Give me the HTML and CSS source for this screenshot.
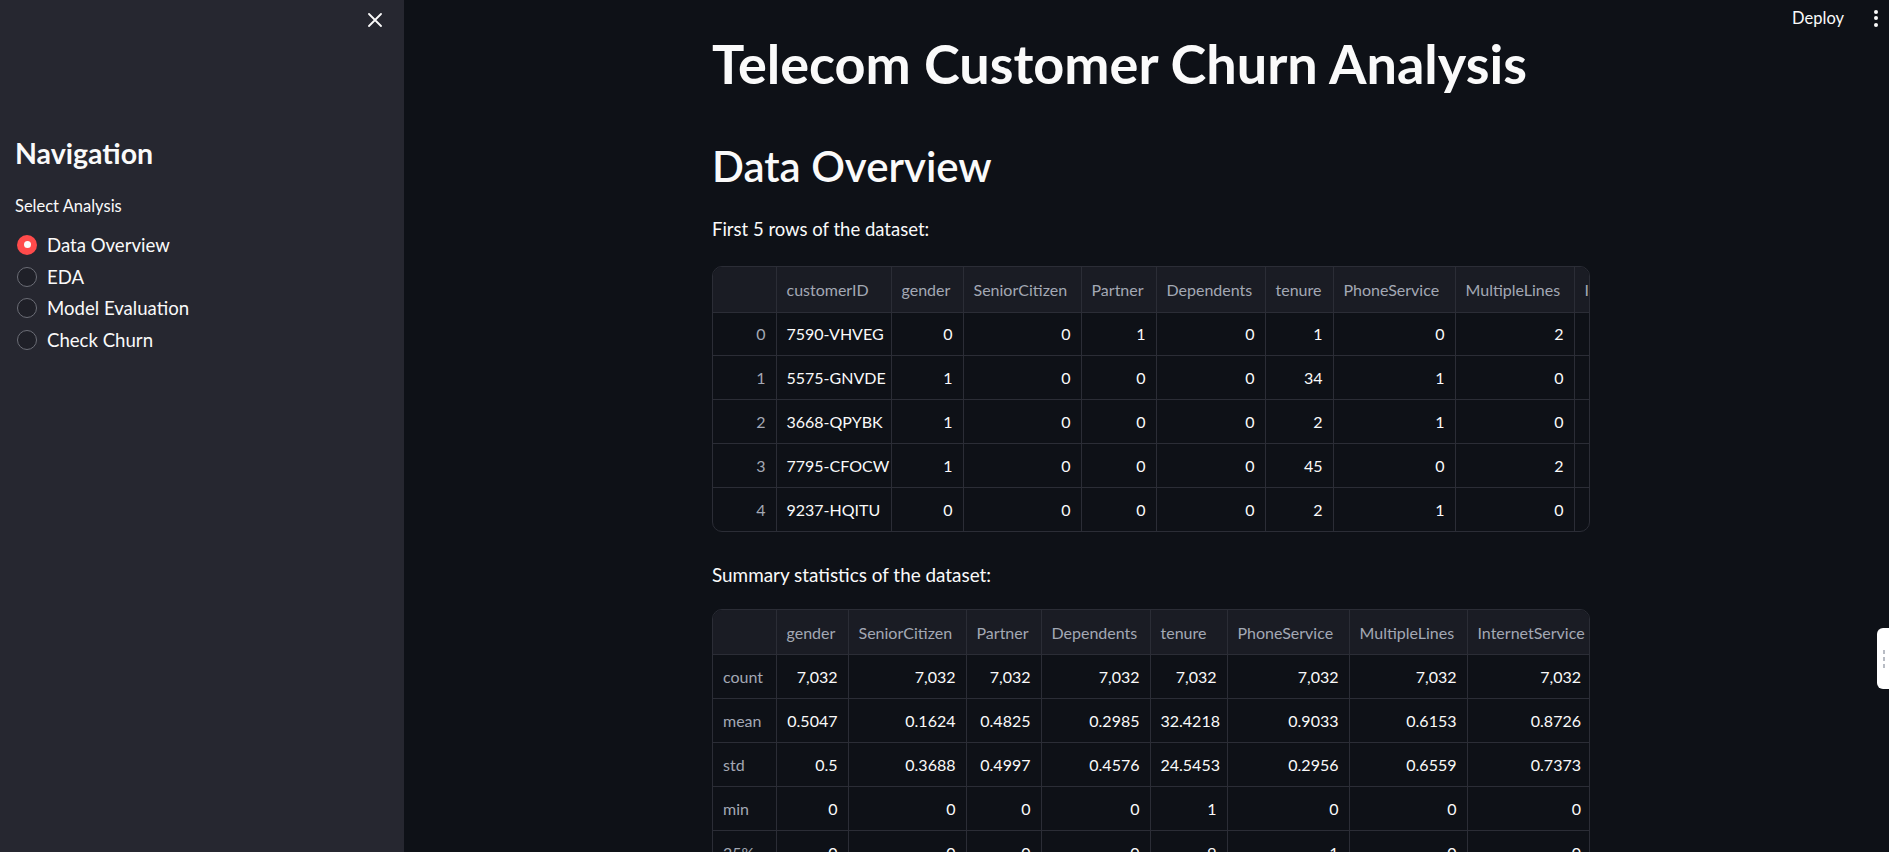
FILE: index.html
```html
<!DOCTYPE html>
<html lang="en">
<head>
<meta charset="utf-8">
<title>Telecom Customer Churn Analysis</title>
<link rel="stylesheet" href="styles.css">
</head>
<body>
<div class="app">
  <aside class="sidebar">
    <div class="sb-top">
      <button class="close" aria-label="Close sidebar">
        <svg width="14" height="14" viewBox="0 0 14 14"><path d="M1 1 L13 13 M13 1 L1 13" stroke="#fafafa" stroke-width="1.8" stroke-linecap="round"/></svg>
      </button>
    </div>
    <div class="sb-content">
      <h1 class="sb-title">Navigation</h1>
      <div class="radio-label">Select Analysis</div>
      <div class="radio-group">
        <label class="radio checked"><span class="circle"></span><span class="rtext">Data Overview</span></label>
        <label class="radio"><span class="circle"></span><span class="rtext">EDA</span></label>
        <label class="radio"><span class="circle"></span><span class="rtext">Model Evaluation</span></label>
        <label class="radio"><span class="circle"></span><span class="rtext">Check Churn</span></label>
      </div>
    </div>
  </aside>
  <main class="main">
    <div class="toolbar">
      <span class="deploy">Deploy</span>
      <span class="menu"><i></i><i></i><i></i></span>
    </div>
    <div class="block">
      <h1 class="title">Telecom Customer Churn Analysis</h1>
      <h2 class="subtitle">Data Overview</h2>
      <p class="text">First 5 rows of the dataset:</p>
      <div class="df">
        <table class="t1">
          <colgroup>
            <col style="width:63px"><col style="width:115px"><col style="width:72px"><col style="width:118px"><col style="width:75px"><col style="width:109px"><col style="width:68px"><col style="width:122px"><col style="width:119px"><col style="width:124px">
          </colgroup>
          <thead>
            <tr><th></th><th>customerID</th><th>gender</th><th>SeniorCitizen</th><th>Partner</th><th>Dependents</th><th>tenure</th><th>PhoneService</th><th>MultipleLines</th><th>InternetService</th></tr>
          </thead>
          <tbody>
            <tr><td class="idx">0</td><td class="l">7590-VHVEG</td><td>0</td><td>0</td><td>1</td><td>0</td><td>1</td><td>0</td><td>2</td><td>0</td></tr>
            <tr><td class="idx">1</td><td class="l">5575-GNVDE</td><td>1</td><td>0</td><td>0</td><td>0</td><td>34</td><td>1</td><td>0</td><td>0</td></tr>
            <tr><td class="idx">2</td><td class="l">3668-QPYBK</td><td>1</td><td>0</td><td>0</td><td>0</td><td>2</td><td>1</td><td>0</td><td>0</td></tr>
            <tr><td class="idx">3</td><td class="l">7795-CFOCW</td><td>1</td><td>0</td><td>0</td><td>0</td><td>45</td><td>0</td><td>2</td><td>0</td></tr>
            <tr><td class="idx">4</td><td class="l">9237-HQITU</td><td>0</td><td>0</td><td>0</td><td>0</td><td>2</td><td>1</td><td>0</td><td>1</td></tr>
          </tbody>
        </table>
      </div>
      <p class="text text2">Summary statistics of the dataset:</p>
      <div class="df df2">
        <table class="t2">
          <colgroup>
            <col style="width:63px"><col style="width:72px"><col style="width:118px"><col style="width:75px"><col style="width:109px"><col style="width:77px"><col style="width:122px"><col style="width:118px"><col style="width:124px">
          </colgroup>
          <thead>
            <tr><th></th><th>gender</th><th>SeniorCitizen</th><th>Partner</th><th>Dependents</th><th>tenure</th><th>PhoneService</th><th>MultipleLines</th><th>InternetService</th></tr>
          </thead>
          <tbody>
            <tr><td class="idx l">count</td><td>7,032</td><td>7,032</td><td>7,032</td><td>7,032</td><td>7,032</td><td>7,032</td><td>7,032</td><td>7,032</td></tr>
            <tr><td class="idx l">mean</td><td>0.5047</td><td>0.1624</td><td>0.4825</td><td>0.2985</td><td>32.4218</td><td>0.9033</td><td>0.6153</td><td>0.8726</td></tr>
            <tr><td class="idx l">std</td><td>0.5</td><td>0.3688</td><td>0.4997</td><td>0.4576</td><td>24.5453</td><td>0.2956</td><td>0.6559</td><td>0.7373</td></tr>
            <tr><td class="idx l">min</td><td>0</td><td>0</td><td>0</td><td>0</td><td>1</td><td>0</td><td>0</td><td>0</td></tr>
            <tr><td class="idx l">25%</td><td>0</td><td>0</td><td>0</td><td>0</td><td>9</td><td>1</td><td>0</td><td>0</td></tr>
            <tr><td class="idx l">50%</td><td>1</td><td>0</td><td>0</td><td>0</td><td>29</td><td>1</td><td>1</td><td>1</td></tr>
          </tbody>
        </table>
      </div>
    </div>
  </main>
  <div class="side-widget"><span></span><span></span><span></span></div>
</div>
</body>
</html>
```

FILE: styles.css
```css
* { box-sizing: border-box; }
html, body { margin: 0; padding: 0; }
body {
  font-family: "Lato", "Noto Sans", sans-serif;
  color: #fafafa;
  background: #0e1117;
  overflow: hidden;
}
.app {
  display: flex;
  height: 100vh;
  position: relative;
}
.sidebar {
  width: 404px;
  flex: 0 0 404px;
  background: #262730;
  height: 100%;
}
.sb-top {
  height: 40px;
  display: flex;
  justify-content: flex-end;
  align-items: center;
  padding-right: 22px;
}
.close {
  background: none;
  border: 0;
  padding: 0;
  width: 14px;
  height: 14px;
  display: flex;
}
.sb-content {
  padding: 95px 15px 0 15px;
}
.sb-title {
  margin: 0;
  font-size: 28.5px;
  line-height: 36px;
  font-weight: 700;
}
.radio-label {
  margin-top: 23px;
  font-size: 16.5px;
  line-height: 24px;
}
.radio-group {
  margin-top: 11px;
  display: flex;
  flex-direction: column;
}
.radio {
  height: 31.7px;
  display: flex;
  align-items: center;
  gap: 10px;
  padding-left: 2px;
  font-size: 18.6px;
}
.circle {
  width: 20px;
  height: 20px;
  border-radius: 50%;
  border: 1.5px solid #6b6d76;
  background: #1f2028;
  flex: 0 0 20px;
}
.radio.checked .circle {
  border: 0;
  background: #ff4b4b;
  display: flex;
  align-items: center;
  justify-content: center;
}
.radio.checked .circle::after {
  content: "";
  width: 7px;
  height: 7px;
  border-radius: 50%;
  background: #fafafa;
}
.main {
  flex: 1;
  height: 100%;
  overflow: hidden;
  padding-left: 9px;
  position: relative;
}
.toolbar {
  position: absolute;
  top: 0;
  right: 0;
  height: 36px;
  display: flex;
  align-items: center;
  gap: 30px;
  padding-right: 11px;
}
.deploy {
  font-size: 16.5px;
  color: #fafafa;
}
.menu {
  display: flex;
  flex-direction: column;
  gap: 2.5px;
}
.menu i {
  width: 4px;
  height: 4px;
  border-radius: 50%;
  background: #fafafa;
  display: block;
}
.block {
  width: 878px;
  margin: 0 auto;
  padding-top: 31px;
}
.title {
  margin: 0;
  font-size: 54px;
  line-height: 66px;
  font-weight: 700;
}
.subtitle {
  margin: 42px 0 0 0;
  font-size: 42px;
  line-height: 54px;
  font-weight: 600;
}
.text {
  margin: 21px 0 0 0;
  font-size: 18.5px;
  line-height: 30px;
}
.text2 {
  margin-top: 28px;
  font-size: 18.9px;
}
.df {
  margin-top: 22px;
  width: 878px;
  border: 1px solid #2b2d36;
  border-radius: 10px;
  overflow: hidden;
}
.df2 { margin-top: 19px; }
table {
  border-collapse: collapse;
  table-layout: fixed;
  font-size: 16px;
}
.t1 { width: 985px; }
.t2 { width: 878px; }
th, td {
  border-right: 1px solid #2b2d36;
  border-bottom: 1px solid #2b2d36;
  padding: 0 10px;
  white-space: nowrap;
  overflow: hidden;
  text-align: right;
}
th {
  height: 45px;
  background: #1a1c24;
  color: #a3a8b4;
  font-weight: 400;
  text-align: left;
}
td {
  height: 43.8px;
  color: #fafafa;
}
tbody tr:last-child td { border-bottom: 0; }
.t2 th:last-child, .t2 td:last-child { border-right: 0; }
td.idx { color: #a3a8b4; }
td.l { text-align: left; }
.side-widget {
  position: absolute;
  left: 1877px;
  top: 628px;
  width: 20px;
  height: 61px;
  background: #ffffff;
  border-radius: 6px;
  display: flex;
  flex-direction: column;
  align-items: flex-start;
  justify-content: center;
  gap: 3px;
  padding-left: 6px;
}
.side-widget span {
  width: 2px;
  height: 4px;
  background: #b8bcc4;
  display: block;
}
```
